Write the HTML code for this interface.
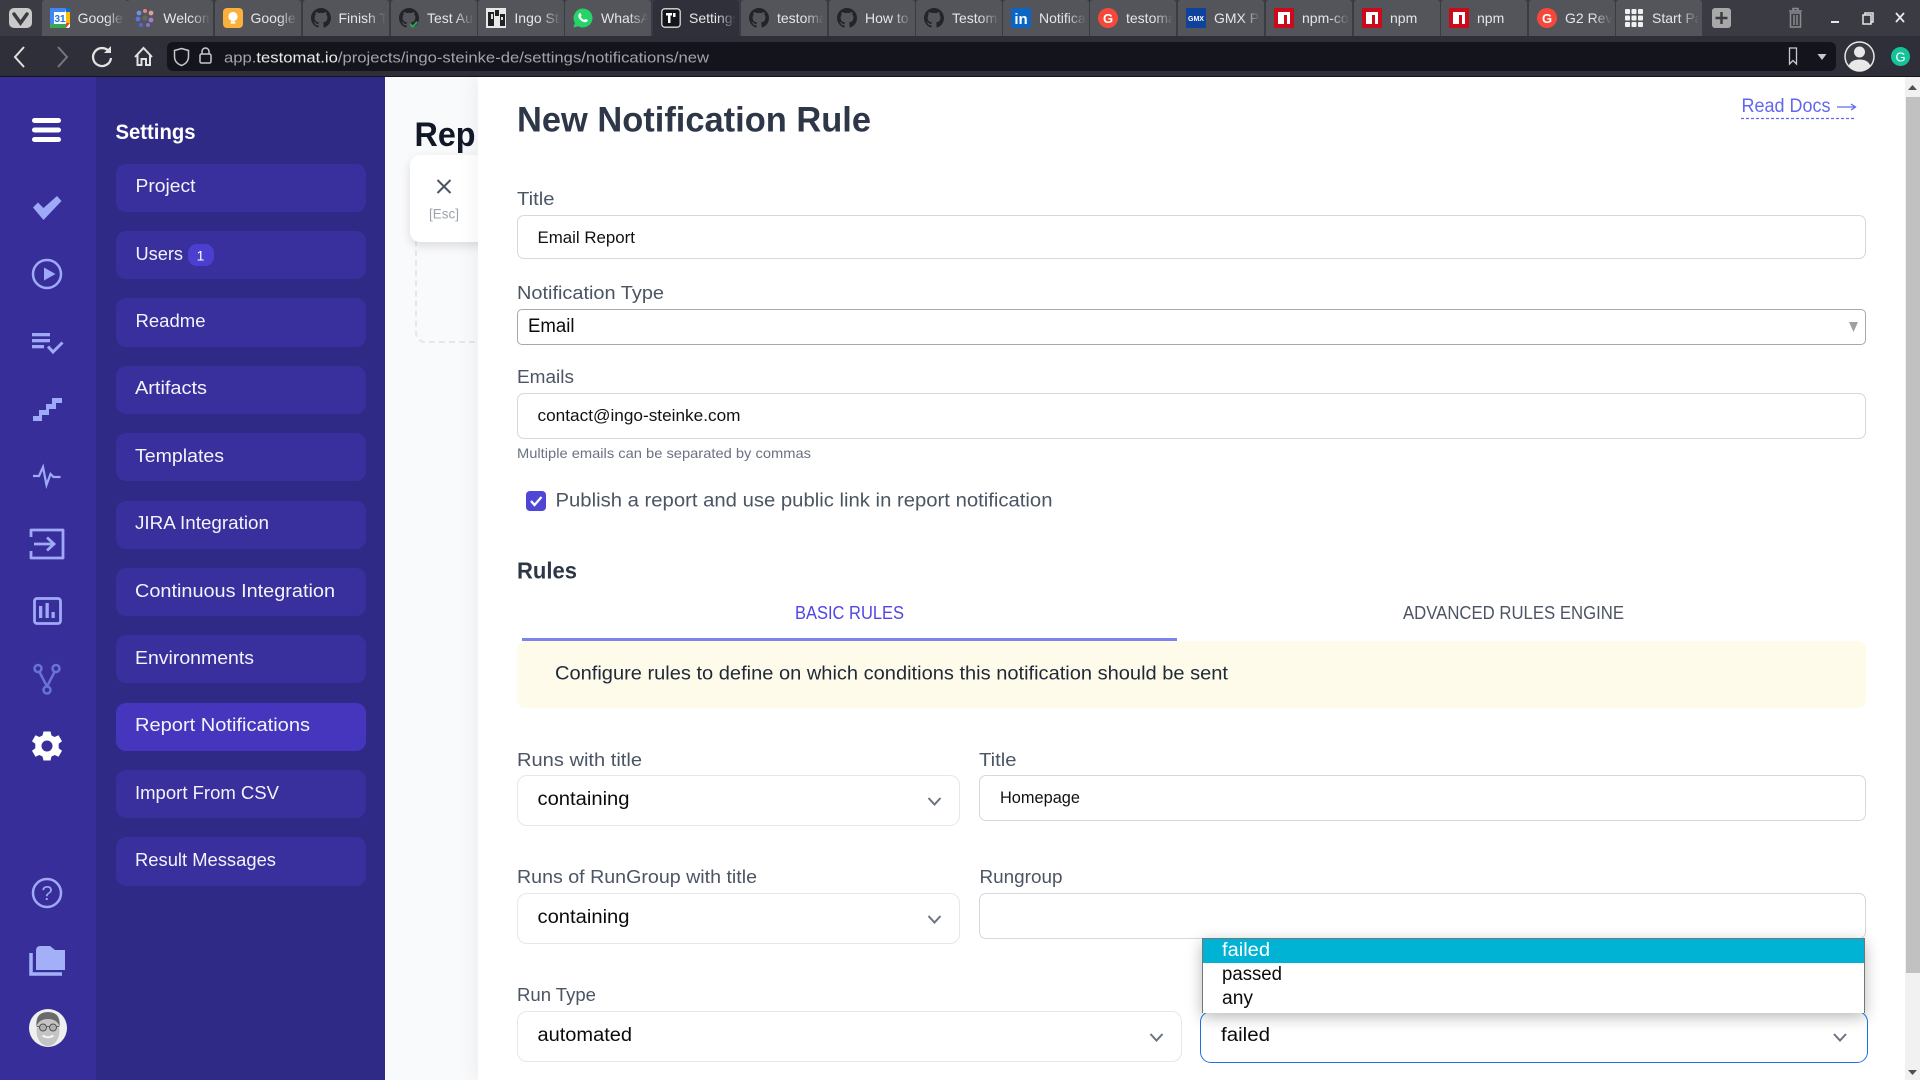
<!DOCTYPE html>
<html lang="en">
<head>
<meta charset="utf-8">
<title>New Notification Rule</title>
<style>
*{box-sizing:border-box}
html,body{margin:0;padding:0;width:1920px;height:1080px;overflow:hidden;background:#fff;font-family:"Liberation Sans",sans-serif}
.a{position:absolute}
.tab{position:absolute;top:0;height:36px;width:86px;background:#54545b;border-radius:3px 3px 0 0;overflow:hidden}
.tab.on{background:#30303b}
.tab span{position:absolute;left:36px;top:9px;font-size:14px;line-height:18px;color:#e6e6e8;white-space:nowrap;width:47px;overflow:hidden;-webkit-mask-image:linear-gradient(90deg,#000 60%,transparent 100%);mask-image:linear-gradient(90deg,#000 60%,transparent 100%)}
.tab svg{position:absolute;left:8px;top:8px;width:20px;height:20px}
.nav{position:absolute;left:116px;width:250px;background:#392f9d;border-radius:10px}
.box{position:absolute;background:#fff;border:1.5px solid #d6d8dd;border-radius:7px}
.sel{position:absolute;background:#fff;border:1.5px solid #e5e7eb;border-radius:10px}
#ov{position:absolute;left:0;top:0;width:1920px;height:1080px;z-index:20}
#ov text{font-family:"Liberation Sans",sans-serif}
.l{font-size:18.5px;fill:#4b5563}
.n{font-size:18.5px;fill:#f3f3fb}
.v{font-size:17px;fill:#111}
.s{font-size:19px;fill:#0b0b0b}
</style>
</head>
<body>
<!-- browser chrome -->
<div class="a" style="left:0;top:0;width:1920px;height:36px;background:#3b3b43"></div>
<div class="a" style="left:0;top:36px;width:1920px;height:40px;background:#2f2f39"></div>
<div class="a" style="left:0;top:76px;width:1920px;height:1px;background:#15151b"></div>
<div class="a" style="left:167px;top:42px;width:1669px;height:29px;background:#14141c;border-radius:6px"></div>

<div class="tab" style="left:41.6px"><svg viewBox="0 0 20 20"><rect width="20" height="20" rx="2" fill="#fff"/><path d="M0 0h15v4H4v12H0z" fill="#4285f4"/><path d="M15 0h5v5h-4z" fill="#1967d2"/><path d="M16 4h4v11h-4z" fill="#fbbc04"/><path d="M4 16h12v4H2q-2 0-2-2v-2z" fill="#34a853"/><path d="M16 15h4l-4 5z" fill="#ea4335"/><text x="10" y="14" font-size="10" font-weight="bold" fill="#1a73e8" text-anchor="middle" font-family="Liberation Sans">31</text></svg><span>Google Calendar</span></div>
<div class="tab" style="left:127.3px"><svg viewBox="0 0 20 20"><circle cx="4" cy="5" r="2.4" fill="#6f8fe8"/><circle cx="10" cy="3" r="2" fill="#e08a80"/><circle cx="16" cy="5" r="2.4" fill="#e0a090"/><circle cx="3" cy="11" r="2.4" fill="#5a75dd"/><circle cx="10" cy="10" r="2.6" fill="#666"/><circle cx="16" cy="12" r="2.4" fill="#a080c8"/><circle cx="6" cy="17" r="2" fill="#5a65d5"/><circle cx="13" cy="17" r="2" fill="#7a78d8"/></svg><span>Welcome</span></div>
<div class="tab" style="left:214.5px"><svg viewBox="0 0 20 20"><rect width="20" height="20" rx="4" fill="#fbb03b"/><circle cx="10" cy="8.5" r="4.6" fill="#fff"/><rect x="7.6" y="13.4" width="4.8" height="2.4" rx="1" fill="#fff"/></svg><span>Google Keep</span></div>
<div class="tab" style="left:302.5px"><svg viewBox="0 0 16 16"><path fill="#23232a" d="M8 0C3.58 0 0 3.58 0 8c0 3.54 2.29 6.53 5.47 7.59.4.07.55-.17.55-.38 0-.19-.01-.82-.01-1.49-2.01.37-2.53-.49-2.69-.94-.09-.23-.48-.94-.82-1.13-.28-.15-.68-.52-.01-.53.63-.01 1.08.58 1.23.82.72 1.21 1.87.87 2.33.66.07-.52.28-.87.51-1.07-1.78-.2-3.64-.89-3.64-3.95 0-.87.31-1.59.82-2.15-.08-.2-.36-1.02.08-2.12 0 0 .67-.21 2.2.82.64-.18 1.32-.27 2-.27s1.36.09 2 .27c1.53-1.04 2.2-.82 2.2-.82.44 1.1.16 1.92.08 2.12.51.56.82 1.27.82 2.15 0 3.07-1.87 3.75-3.65 3.95.29.25.54.73.54 1.48 0 1.07-.01 1.93-.01 2.2 0 .21.15.46.55.38A8.013 8.013 0 0016 8c0-4.42-3.58-8-8-8z"/></svg><span>Finish Tutorial</span></div>
<div class="tab" style="left:391px"><svg viewBox="0 0 16 16"><path fill="#23232a" d="M8 0C3.58 0 0 3.58 0 8c0 3.54 2.29 6.53 5.47 7.59.4.07.55-.17.55-.38 0-.19-.01-.82-.01-1.49-2.01.37-2.53-.49-2.69-.94-.09-.23-.48-.94-.82-1.13-.28-.15-.68-.52-.01-.53.63-.01 1.08.58 1.23.82.72 1.21 1.87.87 2.33.66.07-.52.28-.87.51-1.07-1.78-.2-3.64-.89-3.64-3.95 0-.87.31-1.59.82-2.15-.08-.2-.36-1.02.08-2.12 0 0 .67-.21 2.2.82.64-.18 1.32-.27 2-.27s1.36.09 2 .27c1.53-1.04 2.2-.82 2.2-.82.44 1.1.16 1.92.08 2.12.51.56.82 1.27.82 2.15 0 3.07-1.87 3.75-3.65 3.95.29.25.54.73.54 1.48 0 1.07-.01 1.93-.01 2.2 0 .21.15.46.55.38A8.013 8.013 0 0016 8c0-4.42-3.58-8-8-8z"/><path d="M9 13l2 2 3.5-4" fill="none" stroke="#2ea44f" stroke-width="1.6"/></svg><span>Test Automation</span></div>
<div class="tab" style="left:478.4px"><svg viewBox="0 0 20 20"><rect width="20" height="20" fill="#e8e8e8"/><path d="M2 4h6v14H2zM9 2h4v6H9zM14 6h5v12h-5z" fill="#222"/><path d="M5 6h2v5H5zM15 9h2v3h-2z" fill="#ddd"/></svg><span>Ingo Steinke</span></div>
<div class="tab" style="left:565px"><svg viewBox="0 0 20 20"><path d="M10 .5a9.5 9.5 0 0 0-8.1 14.4L.5 19.5l4.7-1.3A9.5 9.5 0 1 0 10 .5z" fill="#25d366"/><path d="M6.3 5.3c.5-.5 1.2-.5 1.4.1l.8 1.8c.1.4-.4 1-.8 1.5.7 1.400 2 2.600 3.500 3.200.5-.4 1-1 1.400-.9l1.900.9c.5.3.4 1-.1 1.500-1 1-2.600 1.100-4.500.2-2.300-1-4-3-4.500-4.900-.2-1.200.1-2.500.9-3.400z" fill="#fff"/></svg><span>WhatsApp</span></div>
<div class="tab on" style="left:653px"><svg viewBox="0 0 20 20"><rect x=".8" y=".8" width="18.400" height="18.400" rx="3" fill="#14141a" stroke="#ddd" stroke-width="1.300"/><path d="M5 5h6v2.500H9.500V15H7V7.500H5z" fill="#fff"/><rect x="12" y="5" width="2.500" height="4" fill="#fff"/></svg><span>Settings</span></div>
<div class="tab" style="left:741px"><svg viewBox="0 0 16 16"><path fill="#23232a" d="M8 0C3.58 0 0 3.58 0 8c0 3.54 2.29 6.53 5.47 7.59.4.07.55-.17.55-.38 0-.19-.01-.82-.01-1.49-2.01.37-2.53-.49-2.69-.94-.09-.23-.48-.94-.82-1.13-.28-.15-.68-.52-.01-.53.63-.01 1.08.58 1.23.82.72 1.21 1.87.87 2.33.66.07-.52.28-.87.51-1.07-1.78-.2-3.64-.89-3.64-3.95 0-.87.31-1.59.82-2.15-.08-.2-.36-1.02.08-2.12 0 0 .67-.21 2.2.82.64-.18 1.32-.27 2-.27s1.36.09 2 .27c1.53-1.04 2.2-.82 2.2-.82.44 1.1.16 1.92.08 2.12.51.56.82 1.27.82 2.15 0 3.07-1.87 3.75-3.65 3.95.29.25.54.73.54 1.48 0 1.07-.01 1.93-.01 2.2 0 .21.15.46.55.38A8.013 8.013 0 0016 8c0-4.42-3.58-8-8-8z"/></svg><span>testomat</span></div>
<div class="tab" style="left:829px"><svg viewBox="0 0 16 16"><path fill="#23232a" d="M8 0C3.58 0 0 3.58 0 8c0 3.54 2.29 6.53 5.47 7.59.4.07.55-.17.55-.38 0-.19-.01-.82-.01-1.49-2.01.37-2.53-.49-2.69-.94-.09-.23-.48-.94-.82-1.13-.28-.15-.68-.52-.01-.53.63-.01 1.08.58 1.23.82.72 1.21 1.87.87 2.33.66.07-.52.28-.87.51-1.07-1.78-.2-3.64-.89-3.64-3.95 0-.87.31-1.59.82-2.15-.08-.2-.36-1.02.08-2.12 0 0 .67-.21 2.2.82.64-.18 1.32-.27 2-.27s1.36.09 2 .27c1.53-1.04 2.2-.82 2.2-.82.44 1.1.16 1.92.08 2.12.51.56.82 1.27.82 2.15 0 3.07-1.87 3.75-3.65 3.95.29.25.54.73.54 1.48 0 1.07-.01 1.93-.01 2.2 0 .21.15.46.55.38A8.013 8.013 0 0016 8c0-4.42-3.58-8-8-8z"/></svg><span>How to</span></div>
<div class="tab" style="left:916px"><svg viewBox="0 0 16 16"><path fill="#23232a" d="M8 0C3.58 0 0 3.58 0 8c0 3.54 2.29 6.53 5.47 7.59.4.07.55-.17.55-.38 0-.19-.01-.82-.01-1.49-2.01.37-2.53-.49-2.69-.94-.09-.23-.48-.94-.82-1.13-.28-.15-.68-.52-.01-.53.63-.01 1.08.58 1.23.82.72 1.21 1.87.87 2.33.66.07-.52.28-.87.51-1.07-1.78-.2-3.64-.89-3.64-3.95 0-.87.31-1.59.82-2.15-.08-.2-.36-1.02.08-2.12 0 0 .67-.21 2.2.82.64-.18 1.32-.27 2-.27s1.36.09 2 .27c1.53-1.04 2.2-.82 2.2-.82.44 1.1.16 1.92.08 2.12.51.56.82 1.27.82 2.15 0 3.07-1.87 3.75-3.65 3.95.29.25.54.73.54 1.48 0 1.07-.01 1.93-.01 2.2 0 .21.15.46.55.38A8.013 8.013 0 0016 8c0-4.42-3.58-8-8-8z"/></svg><span>Testomat</span></div>
<div class="tab" style="left:1003px"><svg viewBox="0 0 20 20"><rect width="20" height="20" rx="2" fill="#0a66c2"/><text x="10" y="16" font-size="15" font-weight="bold" fill="#fff" text-anchor="middle" font-family="Liberation Sans">in</text></svg><span>Notifications</span></div>
<div class="tab" style="left:1090px"><svg viewBox="0 0 20 20"><circle cx="10" cy="10" r="10" fill="#f5483b"/><text x="10" y="15" font-size="13" font-weight="bold" fill="#fff" text-anchor="middle" font-family="Liberation Sans">G</text></svg><span>testomat</span></div>
<div class="tab" style="left:1178px"><svg viewBox="0 0 20 20"><rect width="20" height="20" fill="#0f429c"/><text x="10" y="13" font-size="7" font-weight="bold" fill="#fff" text-anchor="middle" font-family="Liberation Sans">GMX</text></svg><span>GMX Post</span></div>
<div class="tab" style="left:1266px"><svg viewBox="0 0 20 20"><rect width="20" height="20" fill="#cb0a1e"/><path d="M4 4h12v12h-3V7h-3v9H4z" fill="#fff"/></svg><span>npm-co</span></div>
<div class="tab" style="left:1354px"><svg viewBox="0 0 20 20"><rect width="20" height="20" fill="#cb0a1e"/><path d="M4 4h12v12h-3V7h-3v9H4z" fill="#fff"/></svg><span>npm</span></div>
<div class="tab" style="left:1441px"><svg viewBox="0 0 20 20"><rect width="20" height="20" fill="#cb0a1e"/><path d="M4 4h12v12h-3V7h-3v9H4z" fill="#fff"/></svg><span>npm</span></div>
<div class="tab" style="left:1529px"><svg viewBox="0 0 20 20"><circle cx="10" cy="10" r="10" fill="#f5483b"/><text x="10" y="15" font-size="13" font-weight="bold" fill="#fff" text-anchor="middle" font-family="Liberation Sans">G</text></svg><span>G2 Reviews</span></div>
<div class="tab" style="left:1616px"><svg viewBox="0 0 20 20" fill="#f0f0f0"><rect x="1" y="1" width="5" height="5" rx="1"/><rect x="7.500" y="1" width="5" height="5" rx="1"/><rect x="14" y="1" width="5" height="5" rx="1"/><rect x="1" y="7.500" width="5" height="5" rx="1"/><rect x="7.500" y="7.500" width="5" height="5" rx="1"/><rect x="14" y="7.500" width="5" height="5" rx="1"/><rect x="1" y="14" width="5" height="5" rx="1"/><rect x="7.500" y="14" width="5" height="5" rx="1"/><rect x="14" y="14" width="5" height="5" rx="1"/></svg><span>Start Page</span></div>

<!-- app background -->
<div class="a" style="left:0;top:77px;width:96px;height:1003px;background:#372e9a"></div>
<div class="a" style="left:96px;top:77px;width:289px;height:1003px;background:#2f2a85"></div>
<div class="a" style="left:385px;top:77px;width:93px;height:1003px;background:#f9fafb"></div>
<div class="a" style="left:415px;top:230px;width:90px;height:113px;border:2px dashed #e5e7eb;border-radius:10px"></div>
<div class="a" style="left:410px;top:155px;width:90px;height:87px;background:#fff;border-radius:10px;box-shadow:0 4px 10px rgba(0,0,0,.12)"></div>
<div class="a" style="left:478px;top:77px;width:1442px;height:1003px;background:#fff;box-shadow:-8px 0 14px rgba(0,0,0,.035)"></div>

<!-- nav items -->
<div class="nav" style="top:164px;height:48px"></div>
<div class="nav" style="top:231px;height:48px"></div>
<div class="nav" style="top:298px;height:49px"></div>
<div class="nav" style="top:366px;height:48px"></div>
<div class="nav" style="top:433px;height:48px"></div>
<div class="nav" style="top:501px;height:48px"></div>
<div class="nav" style="top:568px;height:48px"></div>
<div class="nav" style="top:635px;height:48px"></div>
<div class="nav" style="top:703px;height:48px;background:#4536bd"></div>
<div class="nav" style="top:770px;height:48px"></div>
<div class="nav" style="top:837px;height:49px"></div>
<div class="a" style="left:188px;top:244px;width:26px;height:22px;border-radius:9px;background:#4b3fd0"></div>

<!-- form boxes -->
<div class="box" style="left:517px;top:215px;width:1349px;height:44px"></div>
<div class="a" style="left:517px;top:309px;width:1349px;height:36px;background:#fff;border:1.5px solid #a8a8a8;border-radius:5px"></div>
<div class="box" style="left:517px;top:393px;width:1349px;height:46px"></div>
<div class="a" style="left:526px;top:491px;width:20px;height:20px;border-radius:4px;background:#4f46d8"></div>
<div class="a" style="left:522px;top:638px;width:655px;height:2.500px;background:#7c83ec"></div>
<div class="a" style="left:517px;top:641px;width:1349px;height:67px;border-radius:8px;background:#fffbeb"></div>
<div class="sel" style="left:517px;top:775px;width:443px;height:51px"></div>
<div class="box" style="left:979px;top:775px;width:887px;height:46px"></div>
<div class="sel" style="left:517px;top:893px;width:443px;height:51px"></div>
<div class="box" style="left:979px;top:893px;width:887px;height:46px"></div>
<div class="sel" style="left:517px;top:1011px;width:665px;height:51px"></div>
<div class="a" style="left:1199.500px;top:1011px;width:668px;height:52px;background:#fff;border:1.5px solid #1a73e8;border-radius:11px"></div>

<!-- dropdown -->
<div class="a" style="left:1202px;top:938px;width:663px;height:75px;background:#fff;border:1px solid #767676;border-bottom:none;box-shadow:0 4px 14px rgba(0,0,0,.28);z-index:5"></div>
<div class="a" style="left:1203px;top:939px;width:661px;height:24px;background:#00b2d4;z-index:6"></div>

<!-- scrollbar -->
<div class="a" style="left:1905px;top:77px;width:15px;height:1003px;background:#f1f1f1"></div>
<div class="a" style="left:1906px;top:97px;width:14px;height:876px;background:#c1c1c1"></div>

<svg id="ov" viewBox="0 0 1920 1080">
<!-- vivaldi -->
<rect x="9" y="8" width="23" height="20" rx="5" fill="#c9c9c9"/>
<path d="M14 14l6.500 9 6.500-9" fill="none" stroke="#3b3b43" stroke-width="3.500" stroke-linecap="round"/>
<!-- tab bar right -->
<rect x="1712" y="8" width="19" height="20" rx="3" fill="#a8a8a8"/>
<path d="M1721.500 12v12M1715.500 18h12" stroke="#3b3b43" stroke-width="2.500"/>
<path d="M1789 11h13M1793 11v-2.500h5V11M1790.500 13h10v14h-10zM1794 15v10M1797 15v10" fill="none" stroke="#8c8c90" stroke-width="1.500"/>
<path d="M1831 22h8" stroke="#e8e8e8" stroke-width="2"/>
<path d="M1863 15h8v9h-8zM1865 15v-2h8v9h-2" fill="none" stroke="#e8e8e8" stroke-width="1.500"/>
<path d="M1896 13l8 9M1904 13l-8 9" stroke="#e8e8e8" stroke-width="1.800"/>
<!-- toolbar -->
<path d="M24 47l-9 10 9 10" fill="none" stroke="#e2e2e4" stroke-width="2"/>
<path d="M58 47l9 10-9 10" fill="none" stroke="#77777d" stroke-width="2"/>
<path d="M109.500 52a9 9 0 1 0 1.500 6" fill="none" stroke="#e2e2e4" stroke-width="2.300"/>
<path d="M111 46v7h-7z" fill="#e2e2e4"/>
<path d="M135 57l8.500-9 8.500 9M137.500 55v10h4v-6h4.500v6h4V55" fill="none" stroke="#e2e2e4" stroke-width="2"/>
<path d="M181.500 48.500l7 2v6c0 4.500-3 7.500-7 9-4-1.500-7-4.500-7-9v-6z" fill="none" stroke="#c8c8cc" stroke-width="1.500"/>
<rect x="200" y="54" width="11" height="9" rx="1.500" fill="none" stroke="#c8c8cc" stroke-width="1.500"/>
<path d="M202 54v-2.500a3.500 3.500 0 0 1 7 0V54" fill="none" stroke="#c8c8cc" stroke-width="1.500"/>
<text x="224" y="62.500" font-size="15" fill="#a3a3a9" textLength="485" lengthAdjust="spacingAndGlyphs">app.<tspan fill="#ececee">testomat.io</tspan>/projects/ingo-steinke-de/settings/notifications/new</text>
<path d="M1789.500 48h7v16l-3.500-3.500-3.500 3.500z" fill="none" stroke="#c8c8cc" stroke-width="1.300"/>
<path d="M1817.500 54h9l-4.500 6z" fill="#c8c8cc"/>
<ellipse cx="1859.500" cy="56.500" rx="14.500" ry="14.500" fill="#3a3a42" stroke="#e8e8e8" stroke-width="1.500"/>
<circle cx="1859.500" cy="52" r="5.500" fill="#e8e8e8"/>
<path d="M1848.500 66c2-5 6-6.500 11-6.500s9 1.500 11 6.500a14 14 0 0 1-22 0z" fill="#e8e8e8"/>
<circle cx="1900.500" cy="56.500" r="9.500" fill="#15c39a"/>
<text x="1900.500" y="61.500" font-size="13" fill="#fff" text-anchor="middle">G</text>

<!-- rail icons -->
<g fill="#fff"><rect x="32" y="118" width="29" height="5" rx="2.500"/><rect x="32" y="127.500" width="29" height="5" rx="2.500"/><rect x="32" y="137" width="29" height="5" rx="2.500"/></g>
<g fill="#9ea9f7" stroke="none">
<path d="M33 207.500l5-5 5.500 5.500L57 196l4.500 5-18 19z"/>
<path d="M44 267.500l11.500 6.500-11.500 6.500z"/>
<rect x="32" y="333" width="18" height="3.300"/><rect x="32" y="339" width="18" height="3.300"/><rect x="32" y="345" width="12" height="3.300"/>
<path d="M33 416h6v-6h7v-6h6v-6h10v5h-6v6h-7v6h-7v6H33z"/>
<path d="M39 606h3.300v12H39zM45.500 603h3.300v15h-3.300zM51.500 612h3.300v6h-3.300z"/>
</g>
<circle cx="47" cy="274" r="14" fill="none" stroke="#9ea9f7" stroke-width="2.500"/>
<path d="M48 346.500l5 5.500L62.500 342.500" fill="none" stroke="#9ea9f7" stroke-width="3"/>
<path d="M33 476h6l4-9 3.500 18 4-11 3 3h7" fill="none" stroke="#9ea9f7" stroke-width="2.200"/>
<path d="M31 537v-7h32v28H31v-7" fill="none" stroke="#9ea9f7" stroke-width="2.800" stroke-linejoin="round"/>
<path d="M34 544h20M47 537.500l7 6.500-7 6.500" fill="none" stroke="#9ea9f7" stroke-width="2.800"/>
<rect x="34.500" y="598.500" width="26" height="25" rx="2.500" fill="none" stroke="#9ea9f7" stroke-width="2.800"/>
<g fill="none" stroke="#6a72d6" stroke-width="2.500">
<circle cx="38" cy="668.500" r="3.500"/><circle cx="56" cy="668.500" r="3.500"/><circle cx="47" cy="690" r="3.500"/>
<path d="M39.500 672l7.500 14.500M54.500 672L47 686.500"/>
</g>
<path fill="#fff" fill-rule="evenodd" d="M43.500 731.500h7l1 4 3.200 1.500 3.800-1.800 3.500 6-3.300 2.600v4.400l3.300 2.600-3.500 6-3.800-1.800-3.200 1.500-1 4h-7l-1-4-3.200-1.500-3.800 1.800-3.500-6 3.300-2.600v-4.400l-3.300-2.600 3.500-6 3.800 1.800 3.200-1.500zM47 740.500a5.500 5.500 0 1 0 0 11 5.500 5.500 0 0 0 0-11z"/>
<circle cx="47" cy="893" r="14" fill="none" stroke="#9ea9f7" stroke-width="2.500"/>
<text x="47" y="900" font-size="20" fill="#9ea9f7" text-anchor="middle">?</text>
<path d="M36 951q0-5 4-5h10l5 4h10v20H36z" fill="#a3b0f8"/>
<path d="M31 953v21h31" fill="none" stroke="#a3b0f8" stroke-width="3.500"/>
<!-- avatar -->
<circle cx="48" cy="1028" r="19" fill="#efefef"/>
<ellipse cx="48" cy="1031" rx="11.500" ry="15" fill="#c4c4c4"/>
<path d="M36.500 1027q-1.500-15 11.500-15t11.500 15q-2-8-11.500-8t-11.500 8z" fill="#6a6a6a"/>
<path d="M37 1026.500h22" stroke="#666" stroke-width="1"/>
<circle cx="43" cy="1027.500" r="3.500" fill="#b0b0b0" stroke="#555" stroke-width="1"/><circle cx="53" cy="1027.500" r="3.500" fill="#b0b0b0" stroke="#555" stroke-width="1"/>
<path d="M42.500 1035.500q5.500 3.500 11 0" fill="none" stroke="#f4f4f4" stroke-width="2"/>

<!-- sidebar text -->
<text x="115.500" y="139" font-size="21" font-weight="bold" fill="#fff" textLength="80" lengthAdjust="spacingAndGlyphs">Settings</text>
<text class="n" x="135.500" y="192" textLength="60" lengthAdjust="spacingAndGlyphs">Project</text>
<text class="n" x="135.500" y="260" textLength="47.500" lengthAdjust="spacingAndGlyphs">Users</text>
<text x="200.500" y="260.500" font-size="14" fill="#fff" text-anchor="middle">1</text>
<text class="n" x="135.500" y="327" textLength="70" lengthAdjust="spacingAndGlyphs">Readme</text>
<text class="n" x="135" y="394" textLength="72" lengthAdjust="spacingAndGlyphs">Artifacts</text>
<text class="n" x="135" y="462" textLength="89" lengthAdjust="spacingAndGlyphs">Templates</text>
<text class="n" x="135" y="529" textLength="134" lengthAdjust="spacingAndGlyphs">JIRA Integration</text>
<text class="n" x="135" y="597" textLength="200" lengthAdjust="spacingAndGlyphs">Continuous Integration</text>
<text class="n" x="135" y="664" textLength="119" lengthAdjust="spacingAndGlyphs">Environments</text>
<text class="n" x="135" y="731" textLength="175" lengthAdjust="spacingAndGlyphs">Report Notifications</text>
<text class="n" x="135" y="799" textLength="144" lengthAdjust="spacingAndGlyphs">Import From CSV</text>
<text class="n" x="135" y="866" textLength="141" lengthAdjust="spacingAndGlyphs">Result Messages</text>

<!-- behind panel -->
<text x="414.500" y="146" font-size="34" font-weight="bold" fill="#111827" textLength="61" lengthAdjust="spacingAndGlyphs">Rep</text>
<path d="M437.500 180l13 13M450.500 180l-13 13" stroke="#4b5563" stroke-width="2"/>
<text x="429" y="218.500" font-size="14" fill="#9ca3af" textLength="30" lengthAdjust="spacingAndGlyphs">[Esc]</text>

<!-- form text -->
<text x="517" y="131.500" font-size="35" font-weight="bold" fill="#2d3748" textLength="354" lengthAdjust="spacingAndGlyphs">New Notification Rule</text>
<text x="1741.500" y="112" font-size="19" fill="#6366f1" textLength="89" lengthAdjust="spacingAndGlyphs">Read Docs</text>
<path d="M1837 107h18M1851 104l4.500 3-4.500 3" fill="none" stroke="#6366f1" stroke-width="1.300"/>
<path d="M1741 118.500h115" stroke="#6366f1" stroke-width="1.300" stroke-dasharray="3 2"/>
<text class="l" x="517" y="205" textLength="37.500" lengthAdjust="spacingAndGlyphs">Title</text>
<text class="v" x="537.500" y="243" textLength="97.500" lengthAdjust="spacingAndGlyphs">Email Report</text>
<text class="l" x="517" y="299" textLength="147" lengthAdjust="spacingAndGlyphs">Notification Type</text>
<text class="s" x="528" y="332" textLength="46.500" lengthAdjust="spacingAndGlyphs">Email</text>
<path d="M1849 322h9l-4.500 10z" fill="#a0a0a0"/>
<text class="l" x="517" y="383" textLength="57" lengthAdjust="spacingAndGlyphs">Emails</text>
<text class="v" x="537.500" y="421" textLength="203" lengthAdjust="spacingAndGlyphs">contact@ingo-steinke.com</text>
<text x="517" y="458" font-size="14" fill="#6b7280" textLength="294" lengthAdjust="spacingAndGlyphs">Multiple emails can be separated by commas</text>
<path d="M531 501l3.500 4 7-8" fill="none" stroke="#fff" stroke-width="2.300"/>
<text x="555.500" y="506.500" font-size="19" fill="#4b5563" textLength="497" lengthAdjust="spacingAndGlyphs">Publish a report and use public link in report notification</text>
<text x="517" y="578.500" font-size="23" font-weight="bold" fill="#2d3748" textLength="60" lengthAdjust="spacingAndGlyphs">Rules</text>
<text x="795" y="619" font-size="18" fill="#4f46e5" textLength="109" lengthAdjust="spacingAndGlyphs">BASIC RULES</text>
<text x="1403" y="619" font-size="18" fill="#4b5563" textLength="221" lengthAdjust="spacingAndGlyphs">ADVANCED RULES ENGINE</text>
<text x="555" y="679.500" font-size="19" fill="#1f2937" textLength="673" lengthAdjust="spacingAndGlyphs">Configure rules to define on which conditions this notification should be sent</text>
<text class="l" x="517" y="766" textLength="125" lengthAdjust="spacingAndGlyphs">Runs with title</text>
<text class="l" x="979" y="766" textLength="37.500" lengthAdjust="spacingAndGlyphs">Title</text>
<text class="s" x="537.500" y="805" textLength="92" lengthAdjust="spacingAndGlyphs">containing</text>
<text class="v" x="1000" y="803" textLength="80" lengthAdjust="spacingAndGlyphs">Homepage</text>
<text class="l" x="517" y="883" textLength="240" lengthAdjust="spacingAndGlyphs">Runs of RunGroup with title</text>
<text class="l" x="979.500" y="883" textLength="83" lengthAdjust="spacingAndGlyphs">Rungroup</text>
<text class="s" x="537.500" y="923" textLength="92" lengthAdjust="spacingAndGlyphs">containing</text>
<text class="l" x="517" y="1001" textLength="79" lengthAdjust="spacingAndGlyphs">Run Type</text>
<text class="s" x="537.500" y="1041" textLength="94.500" lengthAdjust="spacingAndGlyphs">automated</text>
<text class="s" x="1221" y="1041" textLength="49" lengthAdjust="spacingAndGlyphs">failed</text>
<g fill="none" stroke="#6b7280" stroke-width="2">
<path d="M928.500 798l6 6.500 6-6.500"/><path d="M928.500 916l6 6.500 6-6.500"/><path d="M1150.500 1034l6 6.500 6-6.500"/><path d="M1834 1034l6 6.500 6-6.500"/>
</g>
<!-- dropdown text -->
<text x="1222" y="956" font-size="19" fill="#fff" textLength="48" lengthAdjust="spacingAndGlyphs">failed</text>
<text class="s" x="1222" y="980" textLength="60" lengthAdjust="spacingAndGlyphs">passed</text>
<text class="s" x="1222" y="1004" textLength="31" lengthAdjust="spacingAndGlyphs">any</text>
<!-- scrollbar arrows -->
<path d="M1908 90l4.500-5 4.500 5z" fill="#505050"/>
<path d="M1908 1070l4.500 5 4.500-5z" fill="#505050"/>
</svg>
</body>
</html>
